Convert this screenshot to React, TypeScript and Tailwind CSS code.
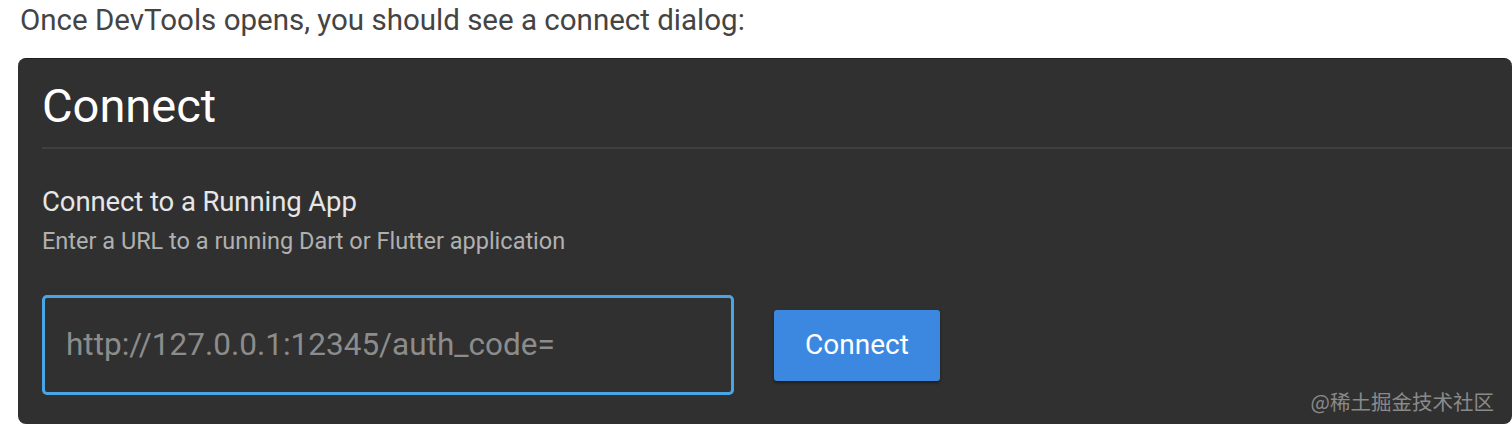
export default function App() {
  return (
    <div className="w-[1512px] h-[430px] bg-white overflow-hidden font-['Roboto',sans-serif]">
      <p className="pl-[20px] pt-[2px] h-[58px] text-[29.5px] leading-[36px] text-[#444]">
        Once DevTools opens, you should see a connect dialog:
      </p>

      <div className="ml-[18px] w-[1494px] h-[366px] bg-[#303030] rounded-[8px] border-t border-[#1e1e1e] pl-[24px] flex flex-col">
        {/* Header */}
        <div className="h-[90px] border-b-2 border-[#3f3f3f] flex items-center">
          <h1 className="text-[47px] leading-none text-white font-normal mt-[4px]">Connect</h1>
        </div>

        {/* Body */}
        <div className="pt-[36px] flex flex-col">
          <h2 className="text-[27.5px] leading-[34px] text-[#e6e6e6] tracking-[-0.1px]">Connect to a Running App</h2>
          <p className="mt-[7px] text-[23.5px] leading-[30px] text-[#b0b0b0]">
            Enter a URL to a running Dart or Flutter application
          </p>

          <div className="mt-[39px] flex items-center gap-[40px]">
            <div className="w-[692px] h-[100px] border-[3px] border-[#4aa5e6] rounded-[5px] flex items-center pl-[21px]">
              <span className="text-[31.5px] text-[#8c8c8c]">http://127.0.0.1:12345/auth_code=</span>
            </div>
            <button className="w-[166px] h-[71px] bg-[#3c87df] rounded-[3px] text-white text-[28px] shadow-[0_2px_3px_rgba(0,0,0,0.4)]">
              Connect
            </button>
          </div>

          <div className="flex justify-end pr-[18px] mt-[-8px]">
            <span className="text-[20.5px] leading-[28px] text-[#8a8a8a] font-['Noto_Sans_CJK_SC',sans-serif]">@稀土掘金技术社区</span>
          </div>
        </div>
      </div>
    </div>
  );
}
